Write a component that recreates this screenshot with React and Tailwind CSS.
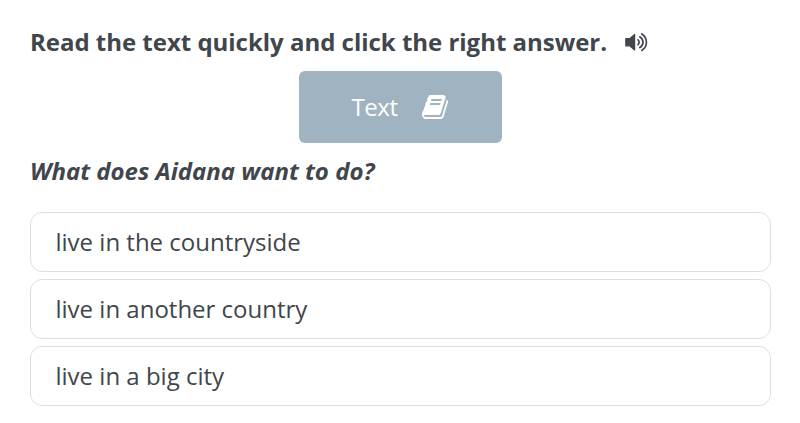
const answers = ["live in the countryside", "live in another country", "live in a big city"];

function SpeakerIcon() {
  return (
    <svg className="ml-[18px] h-[20px] w-[24px]" viewBox="0 0 24 20" fill="none">
      <path
        d="M.8 6.6h4L9.6 2.4v15.6L4.8 13.8h-4z"
        fill="currentColor"
        stroke="currentColor"
        strokeWidth="1.2"
        strokeLinejoin="round"
      />
      <path
        d="M13 7.8a3.2 3.2 0 0 1 0 4.8M14.8 4.8a6.2 6.2 0 0 1 0 10.8M16.8 2a9.6 9.6 0 0 1 0 16.4"
        stroke="currentColor"
        strokeWidth="1.7"
        strokeLinecap="round"
      />
    </svg>
  );
}

function BookIcon() {
  return (
    <svg className="ml-[24px] mb-px h-[28px] w-[26px]" viewBox="0 0 1664 1792" fill="currentColor">
      <path d="M1639 478q40 57 18 129l-275 906q-19 64-76.5 107.5t-122.5 43.5h-923q-77 0-148.5-53.5t-99.5-131.5q-24-67-2-127 0-4 3-27t4-37q1-8-3-21.5t-3-19.5q2-11 8-21t16.5-23.5 16.5-23.5q23-38 45-91.5t30-91.5q3-10 .5-30t-.5-28q3-11 17-28t17-23q21-36 42-92t25-90q1-9-2.5-32t.5-28q4-13 22-30.5t22-22.5q19-26 42.5-84.5t27.5-96.5q1-8-3-25.5t-2-26.5q2-8 9-18t18-23 17-21q8-12 16.5-30.5t15-35 16-36 19.5-32 26.5-23.5 36-11.5 47.5 5.5l-1 3q38-9 51-9h761q74 0 114 56t18 130l-274 906q-36 119-71.5 153.5t-128.5 34.5h-869q-27 0-38 15-11 16-1 43 24 70 144 70h923q29 0 56-15.5t35-41.5l300-987q7-22 5-57 38 15 59 43zm-1064 2q-4 13 2 22.5t20 9.5h608q13 0 25.5-9.5t16.5-22.5l21-64q4-13-2-22.5t-20-9.5h-608q-13 0-25.5 9.5t-16.5 22.5zm-83 256q-4 13 2 22.5t20 9.5h608q13 0 25.5-9.5t16.5-22.5l21-64q4-13-2-22.5t-20-9.5h-608q-13 0-25.5 9.5t-16.5 22.5z" />
    </svg>
  );
}

function App() {
  return (
    <main className="h-screen overflow-hidden bg-white px-[30px] pt-[25px] font-['Open_Sans',sans-serif] text-[24px] text-[#40464c]">
      <div className="flex h-[34px] items-center">
        <h1 className="text-[24px] font-bold tracking-[-0.02px] whitespace-nowrap">
          Read the text quickly and click the right answer.
        </h1>
        <SpeakerIcon />
      </div>

      <button className="mx-auto mt-3 flex h-[72px] w-[203px] items-center justify-center rounded-md bg-[#9fb4c0] pr-px text-white">
        <span className="tracking-[-0.4px]">Text</span>
        <BookIcon />
      </button>

      <p className="mt-[11px] h-[34px] leading-[34px] font-bold italic">What does Aidana want to do?</p>

      <ul className="mt-6 flex w-[741px] flex-col gap-[7px]">
        {answers.map((answer) => (
          <li key={answer} className="flex h-[60px] items-center rounded-xl border border-[#dedfe1] px-[24.5px]">
            {answer}
          </li>
        ))}
      </ul>
    </main>
  );
}

export default App;
